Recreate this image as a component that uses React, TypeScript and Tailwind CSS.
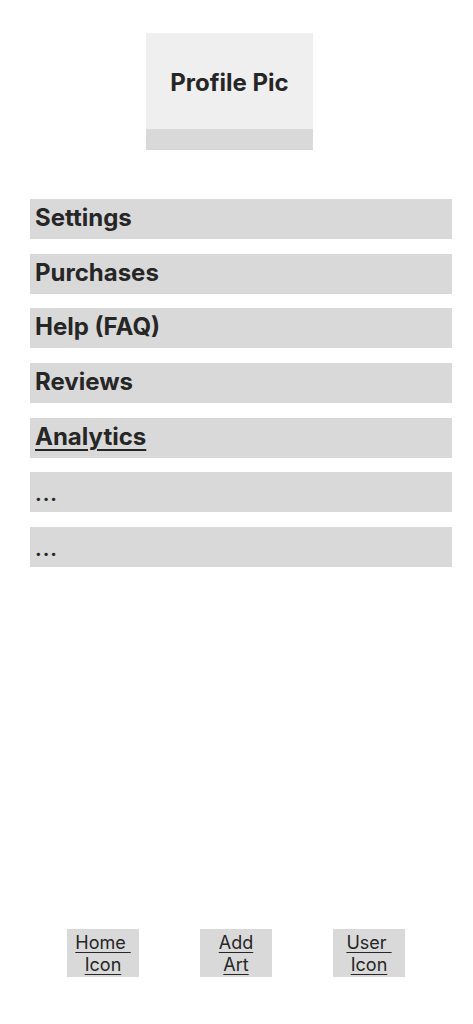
import React from 'react';

const menuItems = ['Settings', 'Purchases', 'Help (FAQ)', 'Reviews', 'Analytics', '...', '...'];

const navItems = [
  { top: 'Home ', bottom: 'Icon' },
  { top: 'Add', bottom: 'Art' },
  { top: 'User ', bottom: 'Icon' },
];

export default function App() {
  return (
    <div
      className="flex h-[1024px] w-[473px] flex-col bg-white text-[#262626]"
      style={{ fontFamily: 'Inter, "Noto Sans", sans-serif' }}
    >
      {/* Profile picture placeholder */}
      <div className="ml-[146px] mt-[33px] flex w-[167px] flex-col">
        <div className="flex h-[96px] items-center justify-center bg-[#efefef] pt-[3px]">
          <span className="text-[24px] font-bold">Profile Pic</span>
        </div>
        <div className="h-[21px] bg-[#d9d9d9]" />
      </div>

      {/* Menu */}
      <div className="ml-[30px] mt-[49px] flex w-[422px] flex-col gap-[14.67px]">
        {menuItems.map((item, i) => (
          <div key={i} className="flex h-[40px] items-center bg-[#d9d9d9] pl-[5px]">
            {item === '...' ? (
              <span className="pt-[4px] text-[20px] font-bold tracking-[1px]">...</span>
            ) : (
              <span
                className={`-mt-[2px] text-[24px] font-bold ${
                  item === 'Analytics' ? 'underline decoration-2 underline-offset-[4px]' : ''
                }`}
              >
                {item}
              </span>
            )}
          </div>
        ))}
      </div>

      {/* Bottom nav */}
      <div className="mb-[47px] ml-[67px] mt-auto flex gap-[61px]">
        {navItems.map((n, i) => (
          <div
            key={i}
            className="flex h-[48px] w-[72px] flex-col items-center justify-center bg-[#d9d9d9] pt-[1px] text-[18px] leading-[22px]"
          >
            <span className="whitespace-pre underline underline-offset-[3px]">{n.top}</span>
            <span className="underline underline-offset-[3px]">{n.bottom}</span>
          </div>
        ))}
      </div>
    </div>
  );
}
